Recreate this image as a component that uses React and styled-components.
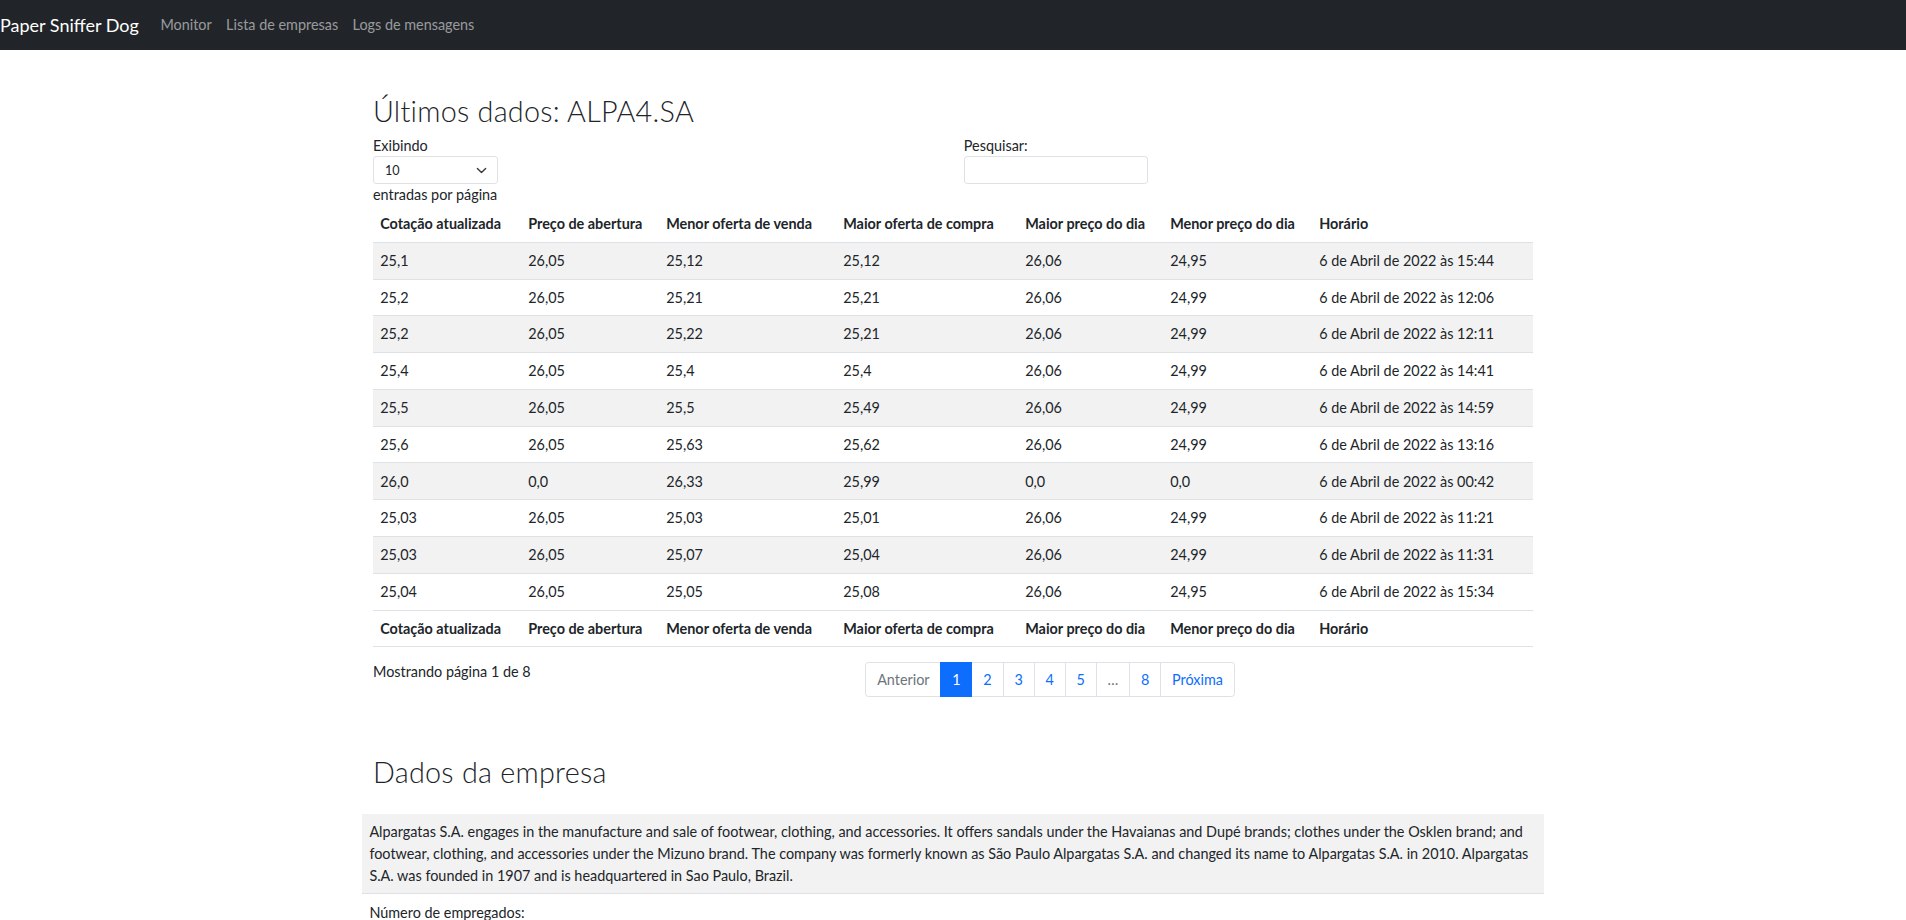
import React from "react";
import styled, { createGlobalStyle } from "styled-components";

const GlobalStyle = createGlobalStyle`
  * { box-sizing: border-box; }
  html, body { margin: 0; padding: 0; background: #fff; }
  body {
    font-family: Lato, "Noto Sans", sans-serif;
    font-size: 14.4px;
    line-height: 1.5;
    color: #212529;
  }
`;

const NavBar = styled.nav`
  height: 50px;
  background: #212529;
  display: flex;
  align-items: center;
`;

const Brand = styled.a`
  font-size: 18px;
  color: #fff;
  text-decoration: none;
  margin-right: 14.4px;
  white-space: nowrap;
`;

const NavList = styled.ul`
  display: flex;
  list-style: none;
  margin: 0;
  padding: 0;
`;

const NavLink = styled.a`
  display: block;
  padding: 7px 7.2px;
  color: rgba(255, 255, 255, 0.55);
  text-decoration: none;
  font-size: 14.4px;
`;

const Main = styled.main`
  width: 1160px;
  margin: 0 auto;
  padding-top: 44px;
`;

const Title = styled.h2`
  font-size: 28.8px;
  font-weight: 300;
  letter-spacing: 0.25px;
  line-height: 1.2;
  margin: 0 0 6.2px;
`;

const Controls = styled.div`
  display: grid;
  grid-template-columns: 1fr 1fr;
  column-gap: 21.6px;
`;

const Field = styled.div`
  display: block;
`;

const SelectWrap = styled.div`
  position: relative;
  width: 125px;
`;

const Select = styled.select`
  display: block;
  width: 125px;
  height: 28px;
  padding: 0 30px 0 11px;
  font-family: inherit;
  font-size: 12.6px;
  color: #212529;
  background: #fff;
  border: 1px solid #dee2e6;
  border-radius: 3.2px;
  appearance: none;
  -webkit-appearance: none;
  outline: none;
`;

const Chevron = styled.svg`
  position: absolute;
  right: 11px;
  top: 8.5px;
  width: 11px;
  height: 11px;
  pointer-events: none;
`;

const SearchInput = styled.input`
  display: block;
  width: 184px;
  height: 28px;
  padding: 0 7px;
  font-family: inherit;
  font-size: 12.6px;
  border: 1px solid #dee2e6;
  border-radius: 3.2px;
  outline: none;
`;

const Table = styled.table`
  width: 1160px;
  border-collapse: collapse;
  table-layout: fixed;
`;

const Th = styled.th`
  text-align: left;
  font-weight: 700;
  padding: 7.2px;
  line-height: 21.4px;
  border-bottom: 1px solid #dee2e6;
  white-space: nowrap;
  overflow: hidden;
`;

const Row = styled.tr`
  background: ${(p) => (p.$striped ? "#f2f2f2" : "#fff")};
`;

const Td = styled.td`
  padding: 7.2px;
  line-height: 21.4px;
  border-bottom: 1px solid #dee2e6;
  white-space: nowrap;
`;

const Footer = styled.div`
  display: grid;
  grid-template-columns: 470.7px 1fr;
  column-gap: 21.6px;
  margin-top: 13px;
`;

const Info = styled.div`
  line-height: 21.6px;
  margin-top: 1px;
`;

const Pagination = styled.ul`
  display: flex;
  list-style: none;
  margin: 2px 0 0;
  padding: 0;
`;

const PageItem = styled.li`
  margin-left: ${(p) => (p.$first ? "0" : "-1px")};
  position: relative;
  z-index: ${(p) => (p.$active ? 2 : 1)};
`;

const PageLink = styled.a`
  display: block;
  padding: 5.4px 10.85px;
  line-height: 21.6px;
  border: 1px solid ${(p) => (p.$active ? "#0d6efd" : "#dee2e6")};
  background: ${(p) => (p.$active ? "#0d6efd" : "#fff")};
  color: ${(p) => (p.$active ? "#fff" : p.$disabled ? "#6c757d" : "#0d6efd")};
  text-decoration: none;
  border-radius: ${(p) =>
    p.$first ? "3.4px 0 0 3.4px" : p.$last ? "0 3.4px 3.4px 0" : "0"};
`;

const Section = styled.section`
  margin-top: 58px;
`;

const DescTable = styled.table`
  width: calc(100% + 21.6px);
  margin: 25px -10.8px 0;
  border-collapse: collapse;
`;

const DescCell = styled.td`
  padding: 7.2px;
  line-height: 21.6px;
  background: ${(p) => (p.$striped ? "#f2f2f2" : "#fff")};
  border-bottom: ${(p) => (p.$striped ? "1px solid #dee2e6" : "none")};
`;

const columns = [
  { label: "Cotação atualizada", width: 148 },
  { label: "Preço de abertura", width: 138 },
  { label: "Menor oferta de venda", width: 177 },
  { label: "Maior oferta de compra", width: 182 },
  { label: "Maior preço do dia", width: 145 },
  { label: "Menor preço do dia", width: 149 },
  { label: "Horário", width: 221 },
];

const rows = [
  ["25,1", "26,05", "25,12", "25,12", "26,06", "24,95", "15:44"],
  ["25,2", "26,05", "25,21", "25,21", "26,06", "24,99", "12:06"],
  ["25,2", "26,05", "25,22", "25,21", "26,06", "24,99", "12:11"],
  ["25,4", "26,05", "25,4", "25,4", "26,06", "24,99", "14:41"],
  ["25,5", "26,05", "25,5", "25,49", "26,06", "24,99", "14:59"],
  ["25,6", "26,05", "25,63", "25,62", "26,06", "24,99", "13:16"],
  ["26,0", "0,0", "26,33", "25,99", "0,0", "0,0", "00:42"],
  ["25,03", "26,05", "25,03", "25,01", "26,06", "24,99", "11:21"],
  ["25,03", "26,05", "25,07", "25,04", "26,06", "24,99", "11:31"],
  ["25,04", "26,05", "25,05", "25,08", "26,06", "24,95", "15:34"],
];

const pages = [
  { label: "Anterior", disabled: true },
  { label: "1", active: true },
  { label: "2" },
  { label: "3" },
  { label: "4" },
  { label: "5" },
  { label: "…", disabled: true },
  { label: "8" },
  { label: "Próxima" },
];

function HeaderRow() {
  return (
    <tr>
      {columns.map((c) => (
        <Th key={c.label}>{c.label}</Th>
      ))}
    </tr>
  );
}

export default function App() {
  return (
    <>
      <GlobalStyle />
      <NavBar>
        <Brand href="#">Paper Sniffer Dog</Brand>
        <NavList>
          <li><NavLink href="#">Monitor</NavLink></li>
          <li><NavLink href="#">Lista de empresas</NavLink></li>
          <li><NavLink href="#">Logs de mensagens</NavLink></li>
        </NavList>
      </NavBar>
      <Main>
        <Title>Últimos dados: ALPA4.SA</Title>
        <Controls>
          <Field>
            <div>Exibindo</div>
            <SelectWrap>
              <Select defaultValue="10">
                <option value="10">10</option>
                <option value="25">25</option>
                <option value="50">50</option>
                <option value="100">100</option>
              </Select>
              <Chevron viewBox="0 0 16 16">
                <path d="m2 5 6 6 6-6" fill="none" stroke="#343a40" strokeWidth="2" strokeLinecap="round" strokeLinejoin="round" />
              </Chevron>
            </SelectWrap>
            <div>entradas por página</div>
          </Field>
          <Field>
            <div>Pesquisar:</div>
            <SearchInput type="search" />
          </Field>
        </Controls>
        <Table>
          <colgroup>
            {columns.map((c) => (
              <col key={c.label} style={{ width: c.width }} />
            ))}
          </colgroup>
          <thead>
            <HeaderRow />
          </thead>
          <tbody>
            {rows.map((r, i) => (
              <Row key={i} $striped={i % 2 === 0}>
                {r.map((v, j) => (
                  <Td key={j}>{j === 6 ? `6 de Abril de 2022 às ${v}` : v}</Td>
                ))}
              </Row>
            ))}
          </tbody>
          <tfoot>
            <HeaderRow />
          </tfoot>
        </Table>
        <Footer>
          <Info>Mostrando página 1 de 8</Info>
          <Pagination>
            {pages.map((p, i) => (
              <PageItem key={i} $first={i === 0} $active={p.active}>
                <PageLink
                  href="#"
                  $active={p.active}
                  $disabled={p.disabled}
                  $first={i === 0}
                  $last={i === pages.length - 1}
                >
                  {p.label}
                </PageLink>
              </PageItem>
            ))}
          </Pagination>
        </Footer>
        <Section>
          <Title>Dados da empresa</Title>
          <DescTable>
            <tbody>
              <tr>
                <DescCell $striped>
                  Alpargatas S.A. engages in the manufacture and sale of footwear, clothing, and accessories. It offers sandals under the Havaianas and Dupé brands; clothes under the Osklen brand; and footwear, clothing, and accessories under the Mizuno brand. The company was formerly known as São Paulo Alpargatas S.A. and changed its name to Alpargatas S.A. in 2010. Alpargatas S.A. was founded in 1907 and is headquartered in Sao Paulo, Brazil.
                </DescCell>
              </tr>
              <tr>
                <DescCell>Número de empregados:</DescCell>
              </tr>
            </tbody>
          </DescTable>
        </Section>
      </Main>
    </>
  );
}
